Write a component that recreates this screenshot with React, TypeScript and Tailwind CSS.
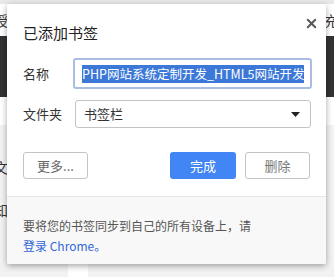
import { X } from "lucide-react";

export default function App() {
  return (
    <div
      className="relative w-[334px] h-[277px] overflow-hidden bg-white text-[#333]"
      style={{ fontFamily: '"Microsoft YaHei", "Noto Sans CJK SC", "Noto Sans", sans-serif' }}
    >
      {/* page behind the dialog */}
      <div className="flex flex-col h-full">
        <div className="h-[4px] bg-[#e8e8e8]" />
        <div className="h-[32px] flex justify-between items-center text-[14px] px-0">
          <span className="-ml-[6px]">授</span>
          <span className="-mr-[4px]">充</span>
        </div>
        <div className="h-[61px] bg-[#333]" />
        <div className="h-[28px] bg-white" />
        <div className="flex-1 bg-[#f2f2f2] flex flex-col text-[14px]">
          <span className="mt-[32px] -ml-[6px]">文</span>
          <span className="mt-[22px] -ml-[6px]">知</span>
          <div className="mt-auto ml-[68px] w-[20px] h-[13px] bg-white" />
        </div>
      </div>

      {/* bookmark dialog */}
      <div className="absolute left-[7px] top-[4px] w-[319px] h-[260px] bg-white rounded-[2px] shadow-[0_2px_6px_rgba(0,0,0,0.35)] flex flex-col">
        <div className="flex justify-between items-start pl-[16px] pr-[7px] pt-[18px]">
          <h1 className="text-[15px] leading-[22px] text-[#222]">已添加书签</h1>
          <X className="w-[15px] h-[15px] text-[#555] mt-[-6px]" strokeWidth={3} />
        </div>

        <div className="flex items-center mt-[14px] pl-[16px] pr-[14px]">
          <span className="w-[50px] text-[13px] text-[#333]">名称</span>
          <div className="flex-1 h-[31px] rounded-[3px] border-2 border-[#a9bde4] flex items-center pl-[7px] pr-[4px] overflow-hidden">
            <span className="bg-[#3b78d8] text-white text-[12.5px] leading-[18px] whitespace-nowrap">
              PHP网站系统定制开发_HTML5网站开发
            </span>
          </div>
        </div>

        <div className="flex items-center mt-[11px] pl-[16px] pr-[15px]">
          <span className="w-[52px] text-[13px] text-[#333]">文件夹</span>
          <div className="flex-1 h-[28px] rounded-[3px] border border-[#c4c4c4] flex items-center justify-between px-[8px]">
            <span className="text-[13px] text-[#333]">书签栏</span>
            <svg width="9" height="5" viewBox="0 0 9 5" className="mr-[2px]">
              <path d="M0 0h9L4.5 5z" fill="#222" />
            </svg>
          </div>
        </div>

        <div className="flex items-center mt-[24px] pl-[16px] pr-[16px]">
          <button className="w-[65px] h-[27px] rounded-[3px] border border-[#c4c4c4] text-[13px] text-[#666]">
            更多...
          </button>
          <button className="ml-auto w-[66px] h-[27px] rounded-[3px] bg-[#4285f4] text-[13px] text-white">
            完成
          </button>
          <button className="ml-[9px] w-[65px] h-[27px] rounded-[3px] border border-[#c4c4c4] text-[13px] text-[#777]">
            删除
          </button>
        </div>

        <div className="mt-[17px] flex-1 border-t border-[#e6e6e6] bg-[#f8f8f8] rounded-b-[2px] pl-[16px] pt-[19px] text-[12px] leading-[20px]">
          <p className="text-[#555]">要将您的书签同步到自己的所有设备上，请</p>
          <p className="text-[#3367d6]">登录 Chrome。</p>
        </div>
      </div>
    </div>
  );
}
